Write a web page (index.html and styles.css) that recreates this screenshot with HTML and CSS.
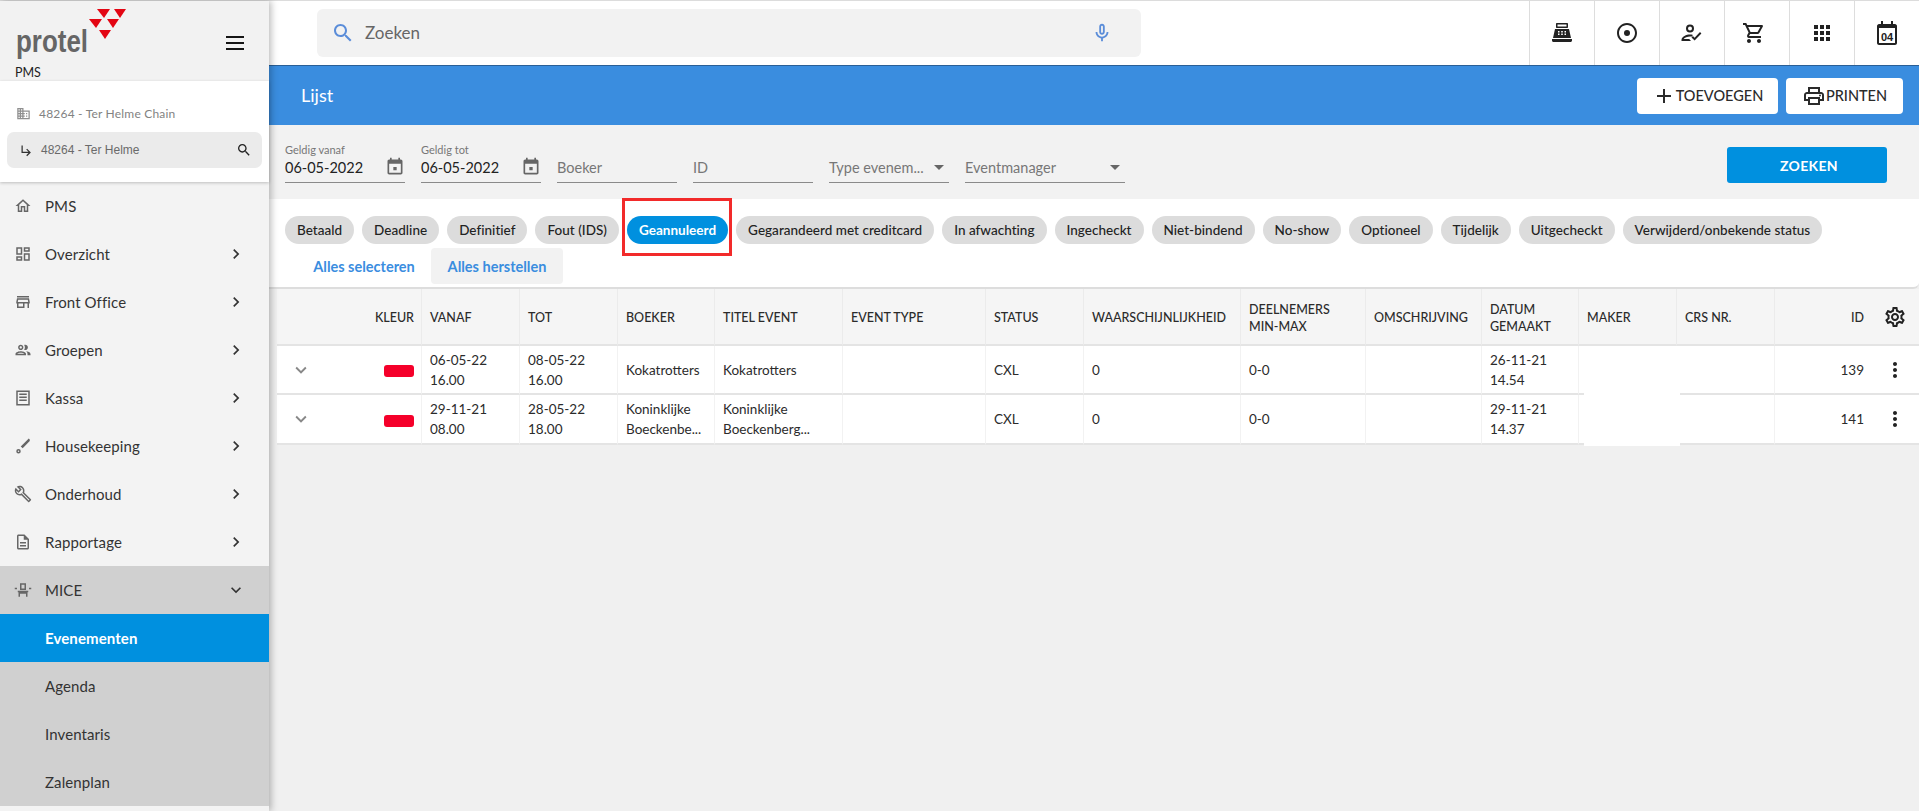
FILE: index.html
```html
<!DOCTYPE html>
<html lang="nl">
<head>
<meta charset="utf-8">
<title>protel PMS - Lijst</title>
<link rel="stylesheet" href="styles.css">
</head>
<body>
<svg class="sprite" xmlns="http://www.w3.org/2000/svg">
<symbol id="i-home" viewBox="0 0 24 24"><path d="M12 5.69l5 4.5V18h-2v-6H9v6H7v-7.81l5-4.5M12 3L2 12h3v8h6v-6h2v6h6v-8h3L12 3z"/></symbol>
<symbol id="i-dash" viewBox="0 0 24 24"><path d="M19 5v2h-4V5h4M9 5v6H5V5h4m10 8v6h-4v-6h4M9 17v2H5v-2h4M21 3h-8v6h8V3zM11 3H3v10h8V3zm10 8h-8v10h8V11zm-10 4H3v6h8v-6z"/></symbol>
<symbol id="i-store" viewBox="0 0 24 24"><path d="M18.36 9l.6 3H5.04l.6-3h12.72M20 4H4v2h16V4zm0 3H4l-1 5v2h1v6h10v-6h4v6h2v-6h1v-2l-1-5zM6 18v-4h6v4H6z"/></symbol>
<symbol id="i-people" viewBox="0 0 24 24"><path d="M9 13.75c-2.34 0-7 1.17-7 3.5V19h14v-1.75c0-2.33-4.66-3.5-7-3.5zM4.34 17c.84-.58 2.87-1.25 4.66-1.25s3.82.67 4.66 1.25H4.34zM9 12c1.93 0 3.5-1.57 3.5-3.5S10.93 5 9 5 5.5 6.57 5.5 8.5 7.07 12 9 12zm0-5c.83 0 1.5.67 1.5 1.5S9.83 10 9 10s-1.5-.67-1.5-1.5S8.17 7 9 7zm7.04 6.81c1.16.84 1.96 1.96 1.96 3.44V19h4v-1.75c0-2.02-3.5-3.17-5.96-3.44zM15 12c1.93 0 3.5-1.57 3.5-3.5S16.93 5 15 5c-.54 0-1.04.13-1.5.35.63.89 1 1.98 1 3.15s-.37 2.26-1 3.15c.46.22.96.35 1.5.35z"/></symbol>
<symbol id="i-receipt" viewBox="0 0 24 24"><path d="M3 2h18v20H3V2zm2 2v16h14V4H5zm2 2h10v2H7V6zm0 4h10v2H7v-2zm0 4h10v2H7v-2z"/></symbol>
<symbol id="i-brush" viewBox="0 0 24 24"><path d="M21 3.2l-1.3-1.2L9 12.5l2.6 2.6L21 5.2V3.2zM6 16a3 3 0 1 0 0 6 3 3 0 0 0 0-6zm0 2a1 1 0 1 1 0 2 1 1 0 0 1 0-2z"/></symbol>
<symbol id="i-build" viewBox="0 0 24 24"><path d="M22.61 18.99l-9.08-9.08c.93-2.34.45-5.1-1.44-7C9.79.61 6.21.4 3.66 2.25L7.5 6.1 6.08 7.51 2.25 3.69C.4 6.23.61 9.82 2.91 12.11c1.86 1.86 4.57 2.35 6.89 1.48l9.11 9.11c.39.39 1.02.39 1.41 0l2.3-2.3c.4-.38.4-1.01-.01-1.41zm-3 1.6l-9.46-9.46c-.61.45-1.29.72-2 .82-1.36.2-2.79-.21-3.83-1.25C3.37 9.76 2.93 8.5 3 7.26l3.09 3.09 4.24-4.24-3.09-3.09c1.24-.07 2.49.37 3.44 1.31 1.08 1.08 1.49 2.57 1.24 3.96-.12.71-.42 1.37-.88 1.96l9.45 9.45-.88.89z"/></symbol>
<symbol id="i-doc" viewBox="0 0 24 24"><path d="M8 16h8v2H8zm0-4h8v2H8zm6-10H6c-1.1 0-2 .9-2 2v16c0 1.1.89 2 1.99 2H18c1.1 0 2-.9 2-2V8l-6-6zm4 18H6V4h7v5h5v11z"/></symbol>
<symbol id="i-chair" viewBox="0 0 24 24"><path d="M8 3h8v9H8V3zm2 2v5h4V5h-4zM5 13h14v2h-1v6h-2v-4H8v4H6v-6H5v-2zM1 9h3v2H1V9zm19 0h3v2h-3V9z"/></symbol>
<symbol id="i-right" viewBox="0 0 24 24"><path d="M10 6L8.59 7.41 13.17 12l-4.58 4.59L10 18l6-6z"/></symbol>
<symbol id="i-down" viewBox="0 0 24 24"><path d="M16.59 8.59L12 13.17 7.41 8.59 6 10l6 6 6-6z"/></symbol>
<symbol id="i-search" viewBox="0 0 24 24"><path d="M15.5 14h-.79l-.28-.27C15.41 12.59 16 11.11 16 9.5 16 5.91 13.09 3 9.5 3S3 5.91 3 9.5 5.91 16 9.5 16c1.61 0 3.09-.59 4.23-1.57l.27.28v.79l5 4.99L20.49 19l-4.99-5zm-6 0C7.01 14 5 11.99 5 9.5S7.01 5 9.5 5 14 7.01 14 9.5 11.99 14 9.5 14z"/></symbol>
<symbol id="i-mic" viewBox="0 0 24 24"><path d="M12 14c1.66 0 3-1.34 3-3V5c0-1.66-1.34-3-3-3S9 3.34 9 5v6c0 1.66 1.34 3 3 3zm-1-9c0-.55.45-1 1-1s1 .45 1 1v6c0 .55-.45 1-1 1s-1-.45-1-1V5zm6 6c0 2.76-2.24 5-5 5s-5-2.24-5-5H5c0 3.53 2.61 6.43 6 6.92V21h2v-3.08c3.39-.49 6-3.39 6-6.92h-2z"/></symbol>
<symbol id="i-cal" viewBox="0 0 24 24"><path d="M14 12h-4v4h4v-4zM16 1v2H8V1H6v2H5c-1.11 0-1.99.9-1.99 2L3 19c0 1.1.89 2 2 2h14c1.1 0 2-.9 2-2V5c0-1.1-.9-2-2-2h-1V1h-2zm3 18H5V8h14v11z"/></symbol>
<symbol id="i-drop" viewBox="0 0 24 24"><path d="M7 10l5 5 5-5z"/></symbol>
<symbol id="i-more" viewBox="0 0 24 24"><path d="M12 8c1.1 0 2-.9 2-2s-.9-2-2-2-2 .9-2 2 .9 2 2 2zm0 2c-1.1 0-2 .9-2 2s.9 2 2 2 2-.9 2-2-.9-2-2-2zm0 6c-1.1 0-2 .9-2 2s.9 2 2 2 2-.9 2-2-.9-2-2-2z"/></symbol>
</svg>

<div class="app">
  <aside class="sidebar">
    <div class="brand">
      <svg class="logo" viewBox="0 0 130 62" width="130" height="62">
        <g fill="#e30613">
          <polygon points="97,9 110,9 104,18"/><polygon points="114,9 126,9 120,18"/>
          <polygon points="89,19 102,19 96,28"/><polygon points="107,19 119,19 113,28"/>
          <polygon points="99,30 111,30 105,39"/>
        </g>
        <text class="logo-word" x="16" y="52" textLength="72" lengthAdjust="spacingAndGlyphs">protel</text>
      </svg>
      <svg class="burger" viewBox="0 0 18 14" width="18" height="14"><path d="M0 0h18v2H0zM0 6h18v2H0zM0 12h18v2H0z"/></svg>
      <div class="brand-name">PMS</div>
    </div>
    <div class="property">
      <div class="chain"><svg class="ico-chain" viewBox="0 0 24 24"><path d="M12 7V3H2v18h20V7H12zM6 19H4v-2h2v2zm0-4H4v-2h2v2zm0-4H4V9h2v2zm0-4H4V5h2v2zm4 12H8v-2h2v2zm0-4H8v-2h2v2zm0-4H8V9h2v2zm0-4H8V5h2v2zm10 12h-8v-2h2v-2h-2v-2h2v-2h-2V9h8v10zm-2-8h-2v2h2v-2zm0 4h-2v2h2v-2z"/></svg><span>48264 - Ter Helme Chain</span></div>
      <div class="hotel">
        <svg class="ico-sub" viewBox="0 0 24 24"><path d="M19 15l-6 6-1.42-1.42L15.17 16H4V4h2v10h9.17l-3.59-3.58L13 9l6 6z"/></svg>
        <span>48264 - Ter Helme</span>
        <svg class="ico-find"><use href="#i-search"/></svg>
      </div>
    </div>
    <nav class="menu">
      <a class="item"><svg class="ico"><use href="#i-home"/></svg><span>PMS</span></a>
      <a class="item"><svg class="ico"><use href="#i-dash"/></svg><span>Overzicht</span><svg class="chev"><use href="#i-right"/></svg></a>
      <a class="item"><svg class="ico"><use href="#i-store"/></svg><span>Front Office</span><svg class="chev"><use href="#i-right"/></svg></a>
      <a class="item"><svg class="ico"><use href="#i-people"/></svg><span>Groepen</span><svg class="chev"><use href="#i-right"/></svg></a>
      <a class="item"><svg class="ico"><use href="#i-receipt"/></svg><span>Kassa</span><svg class="chev"><use href="#i-right"/></svg></a>
      <a class="item"><svg class="ico"><use href="#i-brush"/></svg><span>Housekeeping</span><svg class="chev"><use href="#i-right"/></svg></a>
      <a class="item"><svg class="ico"><use href="#i-build"/></svg><span>Onderhoud</span><svg class="chev"><use href="#i-right"/></svg></a>
      <a class="item"><svg class="ico"><use href="#i-doc"/></svg><span>Rapportage</span><svg class="chev"><use href="#i-right"/></svg></a>
      <a class="item open"><svg class="ico"><use href="#i-chair"/></svg><span>MICE</span><svg class="chev"><use href="#i-down"/></svg></a>
      <a class="item sub active"><span>Evenementen</span></a>
      <a class="item sub"><span>Agenda</span></a>
      <a class="item sub"><span>Inventaris</span></a>
      <a class="item sub"><span>Zalenplan</span></a>
    </nav>
  </aside>

  <main class="main">
    <header class="topbar">
      <div class="search">
        <svg class="search-ico"><use href="#i-search"/></svg>
        <span class="search-text">Zoeken</span>
        <svg class="mic-ico"><use href="#i-mic"/></svg>
      </div>
      <div class="tools">
        <div class="tool"><svg class="tool-ico" viewBox="0 0 24 24"><path d="M7 2h10c.6 0 1 .4 1 1v3c0 .6-.4 1-1 1H7c-.6 0-1-.4-1-1V3c0-.6.4-1 1-1zm.5 1.500v2h9v-2h-9zM5 8h14l2 9H3L5 8zm3 2v1.500h1.500V10H8zm3.200 0v1.500h1.600V10h-1.600zm3.300 0v1.500H16V10h-1.500zM8 12.600v1.500h1.500v-1.500H8zm3.200 0v1.500h1.600v-1.500h-1.600zm3.300 0v1.500H16v-1.500h-1.500zM2 18h20v1.500c0 .8-.7 1.500-1.500 1.500h-17C2.700 21 2 20.300 2 19.500V18z"/></svg></div>
        <div class="tool"><svg class="tool-ico" viewBox="0 0 24 24"><circle cx="12" cy="12" r="3"/><path d="M12 2C6.480 2 2 6.480 2 12s4.480 10 10 10 10-4.480 10-10S17.520 2 12 2zm0 18c-4.420 0-8-3.580-8-8s3.580-8 8-8 8 3.580 8 8-3.580 8-8 8z"/></svg></div>
        <div class="tool"><svg class="tool-ico" viewBox="0 0 24 24"><path d="M10 3.500a4 4 0 1 1 0 8 4 4 0 0 1 0-8zm0 2a2 2 0 1 0 0 4 2 2 0 0 0 0-4zM1.500 19c0-3.500 5-5.500 8.500-5.500 1 0 2 .1 3 .4l-1.600 1.800c-.5-.1-.9-.2-1.400-.2-2.500 0-5.500 1.300-6.300 2.500h5.500l1.800 2H1.500V19zM14.600 19.500l-3.100-3.100 1.400-1.400 1.700 1.700 5.400-5.600 1.400 1.400-6.800 7z"/></svg></div>
        <div class="tool tool-cart"><svg class="tool-ico" viewBox="0 0 24 24"><path d="M15.550 13c.750 0 1.410-.410 1.750-1.030l3.580-6.490c.370-.660-.110-1.480-.870-1.480H5.210l-.940-2H1v2h2l3.600 7.590-1.350 2.440C4.520 15.370 5.480 17 7 17h12v-2H7l1.100-2h7.450zM6.160 6h12.150l-2.760 5H8.530L6.160 6zM7 18c-1.100 0-1.990.900-1.990 2S5.900 22 7 22s2-.900 2-2-.900-2-2-2zm10 0c-1.100 0-1.990.900-1.990 2s.890 2 1.990 2 2-.900 2-2-.900-2-2-2z"/></svg></div>
        <div class="tool"><svg class="tool-ico" viewBox="0 0 24 24"><path d="M4 8h4V4H4v4zm6 12h4v-4h-4v4zm-6 0h4v-4H4v4zm0-6h4v-4H4v4zm6 0h4v-4h-4v4zm6-10v4h4V4h-4zm-6 4h4V4h-4v4zm6 6h4v-4h-4v4zm0 6h4v-4h-4v4z"/></svg></div>
        <div class="tool"><svg class="tool-cal" viewBox="0 0 24 24" width="24" height="24"><path d="M6 0h2v3h8V0h2v3h2c1 0 2 1 2 2v17c0 1-1 2-2 2H4c-1 0-2-1-2-2V5c0-1 1-2 2-2h2V0zM4 7v15h16V7H4z"/><text class="cal-num" x="12" y="19.500" text-anchor="middle">04</text></svg></div>
      </div>
    </header>

    <section class="titlebar">
      <h1 class="title">Lijst</h1>
      <div class="actions">
        <button class="btn btn-add"><svg class="btn-ico" viewBox="0 0 24 24"><path d="M19 13h-6v6h-2v-6H5v-2h6V5h2v6h6v2z"/></svg>TOEVOEGEN</button>
        <button class="btn btn-print"><svg class="btn-ico" viewBox="0 0 24 24"><path d="M19 8h-1V3H6v5H5c-1.660 0-3 1.340-3 3v6h4v4h12v-4h4v-6c0-1.660-1.340-3-3-3zM8 5h8v3H8V5zm8 12v2H8v-4h8v2zm2-2v-2H6v2H4v-4c0-.550.450-1 1-1h14c.550 0 1 .450 1 1v4h-2z"/><circle cx="18" cy="11.500" r="1"/></svg>PRINTEN</button>
      </div>
    </section>

    <section class="filters">
      <div class="field"><label class="field-label">Geldig vanaf</label><div class="field-box"><span class="value">06-05-2022</span><svg class="field-ico"><use href="#i-cal"/></svg></div></div>
      <div class="field"><label class="field-label">Geldig tot</label><div class="field-box"><span class="value">06-05-2022</span><svg class="field-ico"><use href="#i-cal"/></svg></div></div>
      <div class="field"><div class="field-box"><span class="hint">Boeker</span></div></div>
      <div class="field"><div class="field-box"><span class="hint">ID</span></div></div>
      <div class="field"><div class="field-box"><span class="hint">Type evenem...</span><svg class="field-drop"><use href="#i-drop"/></svg></div></div>
      <div class="field field-wide"><div class="field-box"><span class="hint">Eventmanager</span><svg class="field-drop"><use href="#i-drop"/></svg></div></div>
      <button class="btn-search">ZOEKEN</button>
    </section>

    <section class="status">
      <div class="chips">
        <span class="chip">Betaald</span>
        <span class="chip">Deadline</span>
        <span class="chip">Definitief</span>
        <span class="chip">Fout (IDS)</span>
        <span class="chip chip-on">Geannuleerd</span>
        <span class="chip">Gegarandeerd met creditcard</span>
        <span class="chip">In afwachting</span>
        <span class="chip">Ingecheckt</span>
        <span class="chip">Niet-bindend</span>
        <span class="chip">No-show</span>
        <span class="chip">Optioneel</span>
        <span class="chip">Tijdelijk</span>
        <span class="chip">Uitgecheckt</span>
        <span class="chip">Verwijderd/onbekende status</span>
      </div>
      <div class="links">
        <button class="link">Alles selecteren</button>
        <button class="link link-hover">Alles herstellen</button>
      </div>
    </section>

    <div class="table-wrap">
      <table class="grid">
        <colgroup>
          <col class="c-exp"><col class="c-kleur"><col class="c-98"><col class="c-98"><col class="c-97"><col class="c-128"><col class="c-143"><col class="c-98"><col class="c-157"><col class="c-125"><col class="c-116"><col class="c-97"><col class="c-98"><col class="c-98"><col class="c-id"><col class="c-set">
        </colgroup>
        <thead>
          <tr>
            <th class="nb"></th><th class="ar">KLEUR</th><th>VANAF</th><th>TOT</th><th>BOEKER</th><th>TITEL EVENT</th><th>EVENT TYPE</th><th>STATUS</th><th>WAARSCHIJNLIJKHEID</th><th>DEELNEMERS<br>MIN-MAX</th><th>OMSCHRIJVING</th><th>DATUM<br>GEMAAKT</th><th>MAKER</th><th>CRS NR.</th><th class="ar nb">ID</th><th class="cog"><svg class="cog-ico" viewBox="0 0 24 24"><path d="M19.430 12.980c.040-.320.070-.640.070-.980 0-.340-.030-.660-.070-.980l2.110-1.650c.190-.150.240-.420.120-.640l-2-3.460c-.090-.160-.260-.250-.440-.250-.060 0-.120.010-.170.030l-2.490 1c-.520-.400-1.080-.730-1.690-.980l-.380-2.650C14.460 2.180 14.250 2 14 2h-4c-.250 0-.460.180-.490.420l-.380 2.650c-.610.250-1.170.590-1.690.980l-2.490-1c-.060-.020-.120-.030-.180-.030-.170 0-.340.090-.430.250l-2 3.460c-.130.220-.070.490.120.640l2.110 1.650c-.040.320-.070.650-.070.980 0 .330.030.660.070.980l-2.110 1.650c-.190.150-.240.420-.120.640l2 3.460c.090.160.260.250.440.250.060 0 .120-.010.170-.030l2.490-1c.520.400 1.080.730 1.690.980l.380 2.650c.030.240.240.420.490.420h4c.250 0 .460-.180.490-.420l.380-2.650c.610-.250 1.170-.590 1.690-.980l2.490 1c.060.020.120.030.180.030.170 0 .340-.090.430-.250l2-3.460c.120-.220.070-.490-.120-.640l-2.110-1.650zm-1.980-1.710c.040.310.050.520.050.730 0 .210-.020.430-.05.730l-.140 1.130.890.700 1.080.840-.700 1.210-1.270-.510-1.040-.420-.900.680c-.430.320-.840.560-1.250.730l-1.060.43-.160 1.130-.200 1.350h-1.400l-.190-1.350-.160-1.130-1.060-.43c-.430-.180-.830-.410-1.230-.710l-.910-.700-1.060.43-1.270.51-.700-1.210 1.080-.84.890-.700-.140-1.130c-.030-.310-.050-.540-.050-.740s.020-.430.050-.730l.140-1.130-.890-.700-1.080-.84.700-1.210 1.270.51 1.040.42.900-.68c.430-.320.840-.56 1.250-.73l1.060-.43.160-1.130.200-1.350h1.390l.190 1.350.160 1.130 1.060.43c.430.180.830.410 1.230.71l.910.700 1.060-.43 1.270-.51.700 1.210-1.070.85-.890.700.140 1.130zM12 8c-2.210 0-4 1.790-4 4s1.790 4 4 4 4-1.790 4-4-1.790-4-4-4zm0 6c-1.100 0-2-.900-2-2s.900-2 2-2 2 .900 2 2-.900 2-2 2z"/></svg></th>
          </tr>
        </thead>
        <tbody>
          <tr>
            <td class="nb exp"><svg class="row-chev"><use href="#i-down"/></svg></td><td class="ar"><span class="swatch"></span></td><td>06-05-22<br>16.00</td><td>08-05-22<br>16.00</td><td>Kokatrotters</td><td>Kokatrotters</td><td></td><td>CXL</td><td>0</td><td>0-0</td><td></td><td>26-11-21<br>14.54</td><td></td><td></td><td class="ar nb">139</td><td class="cog"><svg class="more-ico"><use href="#i-more"/></svg></td>
          </tr>
          <tr class="row-last">
            <td class="nb exp"><svg class="row-chev"><use href="#i-down"/></svg></td><td class="ar"><span class="swatch"></span></td><td>29-11-21<br>08.00</td><td>28-05-22<br>18.00</td><td>Koninklijke<br>Boeckenbe...</td><td>Koninklijke<br>Boeckenberg...</td><td></td><td>CXL</td><td>0</td><td>0-0</td><td></td><td>29-11-21<br>14.37</td><td></td><td></td><td class="ar nb">141</td><td class="cog"><svg class="more-ico"><use href="#i-more"/></svg></td>
          </tr>
        </tbody>
      </table>
      <div class="mask"></div>
    </div>
  </main>
</div>
</body>
</html>
```

FILE: styles.css
```css
* { box-sizing: border-box; }
html, body { margin: 0; height: 100%; overflow: hidden; }
body { font-family: "Lato", "Noto Sans", sans-serif; color: #2b2b2b; background: #f0f0f0; }
.sprite { display: none; }
svg { display: block; flex: none; fill: currentColor; }

.app { display: flex; height: 811px; border-top: 1px solid #dcdcdc; }

/* Sidebar */
.sidebar { width: 269px; flex: none; background: #f3f3f3; box-shadow: 2px 0 7px rgba(0,0,0,.28); position: relative; z-index: 2; display: flex; flex-direction: column; }
.brand { height: 80px; position: relative; background: #f2f2f2; flex: none; }
.logo { margin-top: -1px; }
.logo-word { font-family: "Liberation Sans", sans-serif; font-weight: 700; font-size: 31px; fill: #666; }
.burger { position: absolute; left: 226px; top: 35px; color: #151515; }
.brand-name { position: absolute; left: 15px; top: 64px; font-size: 12.500px; color: #222; line-height: 16px; }
.property { height: 101px; flex: none; background: #fff; padding: 22px 7px 0; box-shadow: 0 1px 3px rgba(0,0,0,.22); position: relative; }
.chain { display: flex; align-items: center; height: 20px; padding-left: 9px; gap: 8px; font-size: 12px; color: #828282; letter-spacing: .2px; }
.ico-chain { width: 15px; height: 15px; color: #909090; }
.hotel { display: flex; align-items: center; height: 36px; margin-top: 9px; background: #ebebeb; border-radius: 7px; padding: 0 10px 0 12px; font-family: "Liberation Sans", sans-serif; font-size: 12px; color: #6a6a6a; gap: 7px; }
.ico-sub { width: 15px; height: 15px; color: #333; }
.hotel span { flex: 1; }
.ico-find { width: 16px; height: 16px; color: #222; }

.menu { display: flex; flex-direction: column; }
.item { height: 48px; display: flex; align-items: center; padding: 0 23px 0 14px; font-size: 15px; color: #333; }
.item span { flex: 1; letter-spacing: .1px; }
.ico { width: 18px; height: 18px; margin-right: 13px; color: #666; }
.chev { width: 20px; height: 20px; color: #333; }
.open { background: #d0d0d0; }
.sub { background: #d0d0d0; padding-left: 45px; }
.active { background: #0090df; color: #fff; font-weight: 700; }

/* Main */
.main { flex: 1; min-width: 0; display: flex; flex-direction: column; }
.topbar { height: 64px; flex: none; background: #fff; display: flex; align-items: center; padding-left: 48px; }
.search { width: 824px; height: 48px; background: #f2f2f2; border-radius: 6px; display: flex; align-items: center; padding: 0 28px 0 14px; }
.search-ico { width: 24px; height: 24px; color: #5b8dd9; margin-right: 10px; }
.search-text { flex: 1; font-size: 17px; color: #666; margin-top: -2px; }
.mic-ico { width: 22px; height: 22px; color: #5b8dd9; }
.tools { margin-left: auto; display: flex; align-self: stretch; }
.tool { width: 65px; border-left: 1px solid #ddd; display: flex; align-items: center; justify-content: center; color: #222; }
.tool-cart { padding-right: 6px; }
.tool-ico { width: 24px; height: 24px; }
.cal-num { font-family: "Liberation Sans", sans-serif; font-size: 11px; font-weight: 700; fill: #222; }

.titlebar { height: 60px; flex: none; background: #3a8ddf; border-top: 1px solid #2a5f96; display: flex; align-items: center; padding: 0 16px 0 32px; }
.title { margin: -2px 0 0; font-size: 18px; font-weight: 400; color: #fff; flex: 1; }
.actions { display: flex; gap: 8px; }
.btn { height: 36px; border: 0; border-radius: 4px; background: #fff; display: flex; align-items: center; justify-content: center; font: 500 14.500px "Lato", sans-serif; color: #2b2b2b; padding: 0; }
.btn-add { width: 141px; }
.btn-print { width: 117px; }
.btn-ico { width: 24px; height: 24px; }

.filters { height: 74px; flex: none; background: #f2f2f2; display: flex; align-items: flex-end; gap: 16px; padding: 0 32px 16px 16px; }
.field { width: 120px; }
.field-wide { width: 160px; }
.field-label { display: block; font-size: 11px; line-height: 14px; color: #777; }
.field-box { height: 26px; display: flex; align-items: center; border-bottom: 1px solid #8a8a8a; padding-bottom: 5px; }
.value { flex: 1; font-size: 14.500px; color: #222; }
.hint { flex: 1; font-size: 14.500px; color: #777; }
.field-ico { width: 20px; height: 20px; color: #666; }
.field-drop { width: 24px; height: 24px; color: #666; margin: 0 -2px 0 0; }
.btn-search { margin-left: auto; width: 160px; height: 36px; border: 0; border-radius: 3px; background: #0090df; color: #fff; font: 700 14px "Lato", sans-serif; letter-spacing: .3px; padding: 0 0 0 4px; }

.status { height: 90px; flex: none; background: #fff; border-bottom: 2px solid #ddd; border-radius: 0 0 6px 0; padding: 17px 16px 0; }
.chips { display: flex; gap: 8px; }
.chip { height: 28px; display: flex; align-items: center; padding: 0 12px; border-radius: 14px; background: #dcdcdc; font-size: 13.500px; font-weight: 500; color: #222; white-space: nowrap; letter-spacing: .02px; }
.chip-on { background: #0090df; color: #fff; font-weight: 700; position: relative; }
.chip-on::after { content: ""; position: absolute; left: -5px; right: -4px; top: -18px; bottom: -12px; border: 3px solid #f22a2a; }
.links { display: flex; margin-top: 4px; margin-left: 12px; }
.link { height: 36px; width: 134px; border: 0; background: transparent; border-radius: 4px; font: 700 14.500px "Lato", sans-serif; color: #3a8ddf; padding: 0; }
.link-hover { width: 132px; background: #f2f2f2; }

.table-wrap { margin-left: 8px; position: relative; }
.grid { width: 1642px; table-layout: fixed; border-collapse: separate; border-spacing: 0; font-size: 13.500px; color: #2b2b2b; }
.c-exp { width: 60px; } .c-kleur { width: 85px; } .c-97 { width: 97px; } .c-98 { width: 98px; }
.c-128 { width: 128px; } .c-143 { width: 143px; } .c-157 { width: 157px; } .c-125 { width: 125px; }
.c-116 { width: 116px; } .c-id { width: 90px; } .c-set { width: 55px; }
.grid th { height: 57px; background: #f5f5f5; font-size: 12.500px; font-weight: 500; text-align: left; line-height: 17px; padding: 2px 8px 0; border-right: 1px solid #ebebeb; border-bottom: 2px solid #e4e4e4; white-space: nowrap; }
.grid td { background: #fff; height: 49px; line-height: 20px; padding: 0 8px; border-right: 1px solid #f2f2f2; border-bottom: 2px solid #e4e4e4; white-space: nowrap; }
.grid .row-last td { height: 50px; }
.grid .nb { border-right: 0; }
.grid .ar { text-align: right; padding-right: 7px; }
.grid .ar.nb { padding-right: 1px; }
.grid .cog { border-right: 0; padding: 0 13px 0 0; }
.grid .exp { padding-left: 13px; }
.swatch { display: inline-block; width: 30px; height: 12px; border-radius: 3px; background: #f5002a; vertical-align: middle; }
.cog-ico { width: 24px; height: 24px; color: #222; margin-left: auto; }
.more-ico { width: 24px; height: 24px; color: #222; margin-left: auto; }
.row-chev { width: 22px; height: 22px; color: #888; }
.mask { position: absolute; left: 1307px; top: 57px; width: 96px; height: 100px; background: #fff; }
```
